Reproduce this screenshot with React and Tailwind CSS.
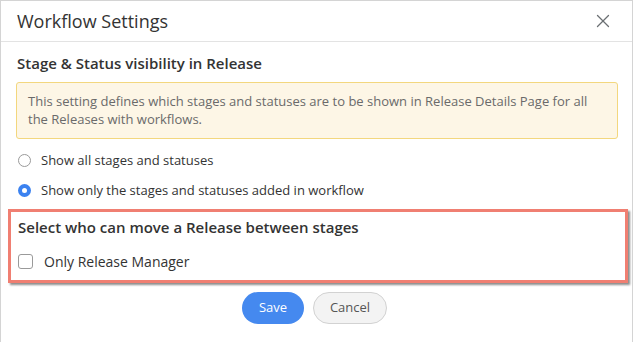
import React, { useState } from 'react';
import { X } from 'lucide-react';

const App = () => {
  const [visibilidad, setVisibilidad] = useState('workflow');
  const [soloManager, setSoloManager] = useState(false);

  return (
    <div
      className="w-[634px] h-[342px] bg-white overflow-hidden"
      style={{ fontFamily: '"Open Sans", "Noto Sans", sans-serif' }}
    >
      <div className="w-[633px] h-[342px] border border-[#d4d4d4] border-b-0 bg-white">
        {/* Header */}
        <div className="h-[41px] flex items-center justify-between pl-4 pr-[18px] border-b border-[#e3e3e3]">
          <h1 className="text-[18px] text-[#333] leading-none">Workflow Settings</h1>
          <X className="w-[22px] h-[22px] text-[#6b6f73]" strokeWidth={1.4} />
        </div>

        {/* Body */}
        <div className="pt-[11px]">
          <div className="px-4">
            <h2 className="text-[15px] font-semibold text-[#333] leading-[20px]">
              Stage &amp; Status visibility in Release
            </h2>
            <div className="mt-[9px] w-[602px] -ml-px border border-[#f3d77e] bg-[#fdf6e6] rounded-[3px] px-[11px] pt-[9px] pb-[10px]">
              <p className="text-[13px] text-[#6a6a6a] leading-[18px]">
                This setting defines which stages and statuses are to be shown in Release Details Page for all the Releases with workflows.
              </p>
            </div>

            <div className="mt-[12px] space-y-[11px]">
              <label className="flex items-center gap-[10px] cursor-pointer h-[19px]">
                <span
                  onClick={() => setVisibilidad('all')}
                  className={`w-[13px] h-[13px] rounded-full flex items-center justify-center ml-[1px] ${
                    visibilidad === 'all' ? 'bg-[#3b82f0]' : 'border border-[#9a9a9a] bg-white'
                  }`}
                >
                  {visibilidad === 'all' && <span className="w-[5px] h-[5px] rounded-full bg-white" />}
                </span>
                <span className="text-[13px] text-[#333]">Show all stages and statuses</span>
              </label>
              <label className="flex items-center gap-[10px] cursor-pointer h-[19px]">
                <span
                  onClick={() => setVisibilidad('workflow')}
                  className={`w-[13px] h-[13px] rounded-full flex items-center justify-center ml-[1px] ${
                    visibilidad === 'workflow' ? 'bg-[#3b82f0]' : 'border border-[#9a9a9a] bg-white'
                  }`}
                >
                  {visibilidad === 'workflow' && <span className="w-[5px] h-[5px] rounded-full bg-white" />}
                </span>
                <span className="text-[13px] text-[#333]">Show only the stages and statuses added in workflow</span>
              </label>
            </div>
          </div>

          {/* Recuadro resaltado */}
          <div className="mt-[9px] ml-[7px] w-[620px] h-[74px] border-[3px] border-[#f07f72] shadow-[2px_2px_2px_rgba(0,0,0,0.45)] pl-[7px] pt-[5px]">
            <h2 className="text-[15px] font-semibold text-[#333] leading-[20px]">
              Select who can move a Release between stages
            </h2>
            <label className="mt-[14px] flex items-center gap-[11px] cursor-pointer">
              <span
                onClick={() => setSoloManager(!soloManager)}
                className={`w-[15px] h-[15px] rounded-[3px] border ${
                  soloManager ? 'bg-[#3b82f0] border-[#3b82f0]' : 'border-[#9a9a9a] bg-white'
                }`}
              />
              <span className="text-[14px] text-[#333]">Only Release Manager</span>
            </label>
          </div>

          {/* Botones */}
          <div className="mt-[9px] flex justify-center gap-[9px] pr-[4px]">
            <button className="w-[62px] h-[32px] rounded-full bg-[#4589ef] text-white text-[13px]">
              Save
            </button>
            <button className="w-[74px] h-[32px] rounded-full bg-[#f3f3f3] border border-[#d2d2d2] text-[#555] text-[13px]">
              Cancel
            </button>
          </div>
        </div>
      </div>
    </div>
  );
};

export default App;
